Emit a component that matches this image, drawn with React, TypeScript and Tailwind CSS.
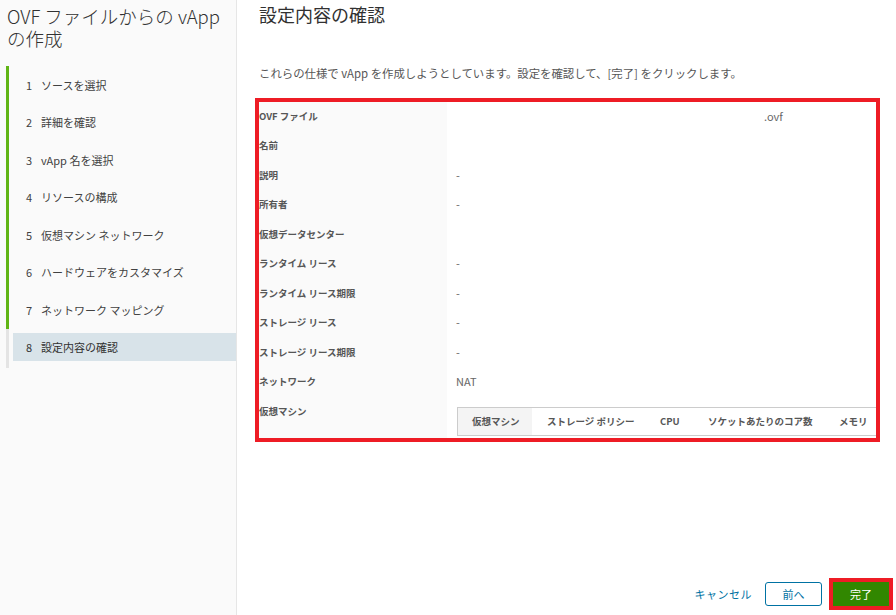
const steps = [
  "ソースを選択",
  "詳細を確認",
  "vApp 名を選択",
  "リソースの構成",
  "仮想マシン ネットワーク",
  "ハードウェアをカスタマイズ",
  "ネットワーク マッピング",
  "設定内容の確認",
];

const rows: { label: string; value?: string; pad?: string }[] = [
  { label: "OVF ファイル", value: ".ovf", pad: "pl-[317px]" },
  { label: "名前" },
  { label: "説明", value: "-" },
  { label: "所有者", value: "-" },
  { label: "仮想データセンター" },
  { label: "ランタイム リース", value: "-" },
  { label: "ランタイム リース期限", value: "-" },
  { label: "ストレージ リース", value: "-" },
  { label: "ストレージ リース期限", value: "-" },
  { label: "ネットワーク", value: "NAT" },
];

export default function App() {
  return (
    <div className="flex h-[615px] w-[896px] overflow-hidden bg-white font-['Noto_Sans_CJK_JP',sans-serif] text-[#313131]">
      <aside className="flex w-[237px] shrink-0 flex-col border-r border-[#e6e6e6] bg-[#fafafa]">
        <h1 className="px-[7px] pt-[5px] text-[18.5px] font-light leading-[22px] text-[#313131]">
          <span className="block">OVF ファイルからの vApp</span>
          <span className="block">の作成</span>
        </h1>
        <ol className="ml-[6px] mt-[17px]">
          {steps.map((s, i) =>
            i < 7 ? (
              <li
                key={s}
                className="flex h-[37.5px] items-center border-l-[3px] border-[#60b515] pl-[17px] text-[11px] text-[#414141]"
              >
                <span className="w-[15px]">{i + 1}</span>
                <span>{s}</span>
              </li>
            ) : (
              <li key={s} className="flex h-[39px] items-center border-l-[3px] border-[#e4e4e4] pb-[2px]">
                <div className="ml-[4px] flex h-[28px] flex-1 items-center bg-[#d8e3e9] pl-[13px] text-[11px] text-[#313131]">
                  <span className="w-[15px]">{i + 1}</span>
                  <span>{s}</span>
                </div>
              </li>
            )
          )}
        </ol>
      </aside>

      <main className="flex min-w-0 flex-1 flex-col">
        <h2 className="ml-[22px] mt-[2px] text-[18px] leading-[24px] text-[#313131]">設定内容の確認</h2>
        <p className="ml-[22px] mt-[39px] text-[11.4px] leading-[16px] text-[#565656]">
          これらの仕様で vApp を作成しようとしています。設定を確認して、[完了] をクリックします。
        </p>

        <div className="ml-[18px] mt-[17px] flex h-[344px] w-[625px] shrink-0 flex-col overflow-hidden border-4 border-[#ee1c25]">
          {rows.map((r) => (
            <div key={r.label} className="flex h-[29.5px] shrink-0">
              <div className="flex w-[188px] shrink-0 items-center bg-[#fafafa] pb-[2px] text-[9.5px] font-bold text-[#565656]">
                {r.label}
              </div>
              <div className={`flex min-w-0 flex-1 items-center pb-[2px] text-[11px] text-[#666666] ${r.pad ?? "pl-[9px]"}`}>
                {r.value ?? ""}
              </div>
            </div>
          ))}
          <div className="flex flex-1">
            <div className="w-[188px] shrink-0 bg-[#fafafa] pt-[7px] text-[9.5px] font-bold leading-[14px] text-[#565656]">
              仮想マシン
            </div>
            <div className="min-w-0 flex-1 overflow-hidden pl-[10px] pt-[10px]">
              <div className="flex h-[29px] w-[440px] items-stretch border border-[#cccccc] text-[9.5px] font-bold text-[#565656]">
                <div className="flex w-[74px] shrink-0 items-center bg-[#f4f4f4] pl-[14px]">仮想マシン</div>
                <div className="flex w-[114px] shrink-0 items-center pl-[15px]">ストレージ ポリシー</div>
                <div className="flex w-[48px] shrink-0 items-center pl-[14px]">CPU</div>
                <div className="flex w-[131px] shrink-0 items-center pl-[14px]">ソケットあたりのコア数</div>
                <div className="flex shrink-0 items-center pl-[14px]">メモリ</div>
              </div>
            </div>
          </div>
        </div>

        <div className="mt-auto flex items-center justify-end pb-[5px] pr-[3px]">
          <button className="mr-[13px] text-[11px] tracking-[0.5px] text-[#0072a3]">キャンセル</button>
          <button className="h-[24px] w-[57px] rounded-[3px] border border-[#0072a3] text-[11px] text-[#0072a3]">
            前へ
          </button>
          <div className="ml-[7px] border-4 border-[#ee1c25]">
            <button className="flex h-[24px] w-[56px] items-center justify-center bg-[#318700] text-[11px] text-white">
              完了
            </button>
          </div>
        </div>
      </main>
    </div>
  );
}
